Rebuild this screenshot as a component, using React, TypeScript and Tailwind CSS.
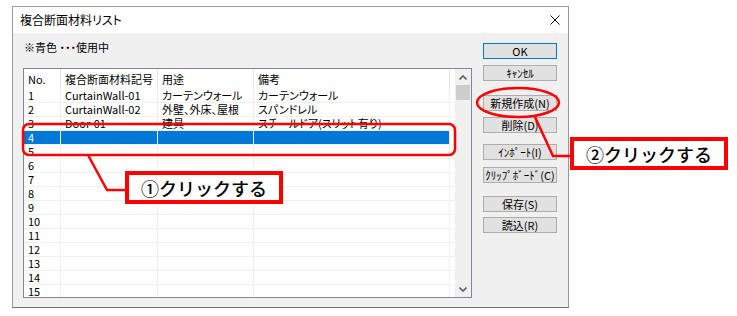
import React from 'react';

type Row = { no: string; code?: string; use?: string; note?: string };

const rows: Row[] = [
  { no: '1', code: 'CurtainWall-01', use: 'カーテンウォール', note: 'カーテンウォール' },
  { no: '2', code: 'CurtainWall-02', use: '外壁、外床、屋根', note: 'スパンドレル' },
  { no: '3', code: 'Door-01', use: '建具', note: 'スチールドア(スリット有り)' },
  { no: '4' },
  { no: '5' },
  { no: '6' },
  { no: '7' },
  { no: '8' },
  { no: '9' },
  { no: '10' },
  { no: '11' },
  { no: '12' },
  { no: '13' },
  { no: '14' },
  { no: '15' },
];

const buttons = [
  { label: 'OK', cls: 'mb-[6px] border-[#0078d7]' },
  { label: 'ｷｬﾝｾﾙ', cls: 'mb-[14px] border-[#adadad]' },
  { label: '新規作成(N)', cls: 'mb-[6px] border-[#adadad]' },
  { label: '削除(D)', cls: 'mb-[11px] border-[#adadad]' },
  { label: 'ｲﾝﾎﾟｰﾄ(I)', cls: 'mb-[7px] border-[#adadad]' },
  { label: 'ｸﾘｯﾌﾟﾎﾞｰﾄﾞ(C)', cls: 'mb-[13px] border-[#adadad]' },
  { label: '保存(S)', cls: 'mb-[5px] border-[#adadad]' },
  { label: '読込(R)', cls: 'border-[#adadad]' },
];

const Chevron = ({ down }: { down?: boolean }) => (
  <svg width="8" height="5" viewBox="0 0 8 5" className={down ? 'rotate-180' : ''}>
    <path d="M0.5 4.5 L4 1 L7.5 4.5" fill="none" stroke="#606060" strokeWidth="1.6" />
  </svg>
);

const ListBox = () => (
  <div className="w-[449px] h-[230px] border border-[#828790] bg-white flex overflow-hidden">
    <div className="w-[431px] flex flex-col">
      {/* header */}
      <div className="h-[20px] flex shrink-0 text-black">
        <div className="w-[37px] border-r border-[#e5e5e5] pl-[4px] flex items-center">No.</div>
        <div className="w-[97px] border-r border-[#e5e5e5] pl-[4px] flex items-center">複合断面材料記号</div>
        <div className="w-[96px] border-r border-[#e5e5e5] pl-[4px] flex items-center">用途</div>
        <div className="w-[196px] border-r border-[#e5e5e5] pl-[4px] flex items-center">備考</div>
      </div>
      {rows.map(r => {
        const sel = r.no === '4';
        const cell = `h-full border-r border-[#f0f0f0] pl-[4px] flex items-center whitespace-nowrap leading-[13px] ${sel ? 'bg-[#0078d7] text-white' : ''}`;
        return (
          <div key={r.no} className="h-[14px] flex shrink-0 border-b border-[#f0f0f0]">
            <div className={`w-[37px] ${cell}`}>{r.no}</div>
            <div className={`w-[97px] ${cell}`}>{r.code}</div>
            <div className={`w-[96px] ${cell}`}>{r.use}</div>
            <div className={`w-[196px] ${cell}`}>{r.note}</div>
          </div>
        );
      })}
    </div>
    <div className="w-[16px] h-full bg-[#f0f0f0] flex flex-col items-center">
      <div className="h-[16px] flex items-center justify-center"><Chevron /></div>
      <div className="w-[14px] h-[15px] bg-[#cdcdcd]" />
      <div className="flex-1" />
      <div className="h-[16px] flex items-center justify-center"><Chevron down /></div>
    </div>
  </div>
);

const Callout = ({ text, cls }: { text: string; cls: string }) => (
  <div className={`absolute w-[158px] h-[33px] border-4 border-[#ff0000] bg-white flex items-center justify-center text-[18px] leading-[20px] font-medium text-black [font-feature-settings:normal] ${cls}`}>
    {text}
  </div>
);

export default function App() {
  return (
    <div className="relative w-[737px] h-[316px] bg-white overflow-hidden pt-[6px] pl-[12px] font-['Noto_Sans_CJK_JP',sans-serif] text-[11px] leading-[14px] [font-feature-settings:'palt']">
      <div className="w-[557px] h-[302px] border border-[#999999] border-b-[#707070] flex flex-col">
        {/* title bar */}
        <div className="h-[26px] bg-white flex items-center justify-between pl-[7px] pr-[7px] shrink-0">
          <span className="text-[12px]">複合断面材料リスト</span>
          <svg width="10" height="10" viewBox="0 0 10 10" className="mr-[1px]">
            <path d="M0.5 0.5 L9.5 9.5 M9.5 0.5 L0.5 9.5" stroke="#111" strokeWidth="1" />
          </svg>
        </div>
        {/* client area */}
        <div className="flex-1 bg-[#f0f0f0] flex pl-[10px]">
          <div className="flex flex-col pt-[7px]">
            <div className="h-[14px] pl-[1px]">※青色 ・・・使用中</div>
            <div className="mt-[14px]"><ListBox /></div>
          </div>
          <div className="flex flex-col pt-[10px] ml-[11px]">
            {buttons.map(b => (
              <div key={b.label} className={`w-[74px] h-[16px] border bg-[#e1e1e1] flex items-center justify-center text-[11px] leading-[12px] font-normal ${b.cls}`}>
                {b.label}
              </div>
            ))}
          </div>
        </div>
      </div>

      {/* annotations */}
      <svg className="absolute left-0 top-0 pointer-events-none" width="737" height="316">
        <rect x="23" y="124" width="432" height="31" rx="6" fill="none" stroke="#ff0000" strokeWidth="2.5" />
        <polyline points="88,155 107,190 126,190" fill="none" stroke="#ff0000" strokeWidth="2.5" />
        <ellipse cx="518" cy="102.5" rx="41" ry="14.5" fill="none" stroke="#ff0000" strokeWidth="2.5" />
        <polyline points="535,117 553,156 571,156" fill="none" stroke="#ff0000" strokeWidth="2.5" />
      </svg>
      <Callout text="①クリックする" cls="left-[125px] top-[171px]" />
      <Callout text="②クリックする" cls="left-[570px] top-[137px]" />
    </div>
  );
}
